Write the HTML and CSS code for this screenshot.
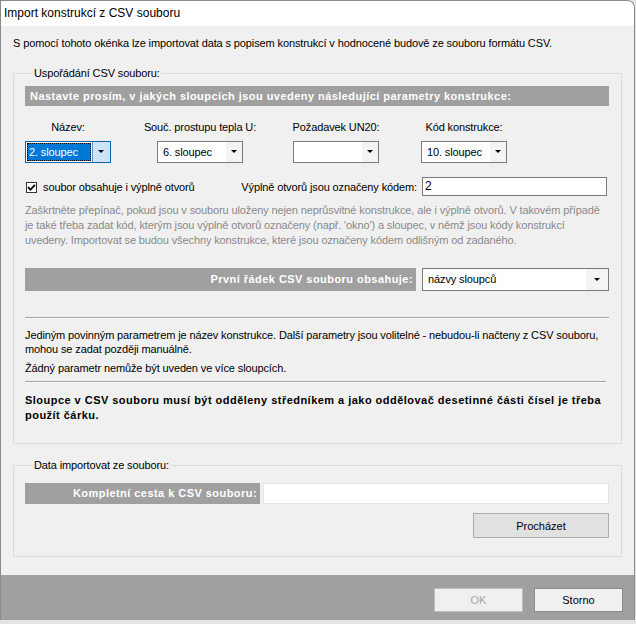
FILE: index.html
```html
<!DOCTYPE html>
<html lang="cs">

<head>
    <meta charset="UTF-8">
    <meta name="viewport" content="width=device-width, initial-scale=1.0">
    <title>Import konstrukcí z CSV souboru</title>
    <link rel="stylesheet" href="styles.css">
</head>

<body>
    <div class="window">
        <div class="titlebar">Import konstrukcí z CSV souboru</div>

        <div class="content">
            <p class="intro">S pomocí tohoto okénka lze importovat data s popisem konstrukcí v hodnocené budově ze souboru formátu CSV.</p>

            <fieldset class="group group-columns">
                <legend>Uspořádání CSV souboru:</legend>
                <div class="bar">Nastavte prosím, v jakých sloupcích jsou uvedeny následující parametry konstrukce:</div>

                <div class="columns">
                    <div class="col">
                        <span class="col-label">Název:</span>
                        <div class="combo combo-active">
                            <span class="combo-value"><span class="sel">2. sloupec</span></span>
                            <span class="combo-btn"></span>
                        </div>
                    </div>
                    <div class="col">
                        <span class="col-label">Souč. prostupu tepla U:</span>
                        <div class="combo">
                            <span class="combo-value">6. sloupec</span>
                            <span class="combo-btn"></span>
                        </div>
                    </div>
                    <div class="col">
                        <span class="col-label">Požadavek UN20:</span>
                        <div class="combo">
                            <span class="combo-value"></span>
                            <span class="combo-btn"></span>
                        </div>
                    </div>
                    <div class="col">
                        <span class="col-label">Kód konstrukce:</span>
                        <div class="combo">
                            <span class="combo-value">10. sloupec</span>
                            <span class="combo-btn"></span>
                        </div>
                    </div>
                </div>

                <div class="openings">
                    <label class="check">
                        <span class="box">
                            <svg width="9" height="9" viewBox="0 0 9 9"><path d="M1 4.2 L3.4 6.6 L8 1.8" fill="none" stroke="#000" stroke-width="1.8"/></svg>
                        </span>
                        soubor obsahuje i výplně otvorů
                    </label>
                    <span class="code-label">Výplně otvorů jsou označeny kódem:</span>
                    <div class="textbox">2</div>
                </div>

                <p class="hint">Zaškrtněte přepínač, pokud jsou v souboru uloženy nejen neprůsvitné konstrukce, ale i výplně otvorů. V takovém případě<br>je také třeba zadat kód, kterým jsou výplně otvorů označeny (např. 'okno') a sloupec, v němž jsou kódy konstrukcí<br>uvedeny. Importovat se budou všechny konstrukce, které jsou označeny kódem odlišným od zadaného.</p>

                <div class="first-row">
                    <div class="bar bar-right">První řádek CSV souboru obsahuje:</div>
                    <div class="combo combo-wide">
                        <span class="combo-value">názvy sloupců</span>
                        <span class="combo-btn"></span>
                    </div>
                </div>

                <hr class="sep">
                <p class="note">Jediným povinným parametrem je název konstrukce. Další parametry jsou volitelné - nebudou-li načteny z CSV souboru,<br>mohou se zadat později manuálně.</p>
                <p class="note note-second">Žádný parametr nemůže být uveden ve více sloupcích.</p>
                <hr class="sep sep-short">
                <p class="warning">Sloupce v CSV souboru musí být odděleny středníkem a jako oddělovač desetinné části čísel je třeba<br>použít čárku.</p>
            </fieldset>

            <fieldset class="group group-file">
                <legend>Data importovat ze souboru:</legend>
                <div class="path-row">
                    <div class="bar bar-right">Kompletní cesta k CSV souboru:</div>
                    <div class="path-input"></div>
                </div>
                <div class="browse-row">
                    <button class="btn btn-browse">Procházet</button>
                </div>
            </fieldset>
        </div>

        <div class="footer">
            <button class="btn btn-disabled">OK</button>
            <button class="btn">Storno</button>
        </div>
    </div>
</body>

</html>
```

FILE: styles.css
```css
body {
    margin: 0;
    background-color: #e4e4e4;
    font-family: 'Liberation Sans', Arial, sans-serif;
    font-size: 11px;
    letter-spacing: -0.12px;
    color: #000;
}

.window {
    width: 635px;
    height: 620px;
    box-sizing: border-box;
    border: 1px solid #8a8a8a;
    border-bottom: none;
    border-top-right-radius: 8px;
    background-color: #f0f0f0;
    display: flex;
    flex-direction: column;
    overflow: hidden;
}

.titlebar {
    height: 25px;
    line-height: 25px;
    padding-left: 3px;
    background-color: #fff;
    font-size: 12px;
    letter-spacing: 0;
}

.content {
    flex: 1;
    padding-left: 12px;
}

p {
    margin: 0;
}

.intro {
    margin-top: 11px;
    line-height: 13px;
}

/* group boxes */
.group {
    width: 609px;
    box-sizing: border-box;
    margin: 17px 0 0 0;
    padding: 0 12px 20px 11px;
    border: 1px solid #dcdcdc;
    min-width: 0;
}

.group legend {
    margin-left: 8px;
    padding: 0 1px;
    line-height: 13px;
}

.group-file {
    margin-top: 15px;
    padding-bottom: 18px;
}

.bar {
    margin-top: 6px;
    height: 20px;
    line-height: 20px;
    padding-left: 5px;
    background-color: #a0a0a0;
    color: #fff;
    font-weight: bold;
    letter-spacing: 0.45px;
    white-space: nowrap;
}

.bar-right {
    margin-top: 0;
    text-align: right;
    padding: 0 3px 0 0;
}

/* column pickers */
.columns {
    display: grid;
    grid-template-columns: 132px 136px 128px 86px;
    margin-top: 15px;
}

.col {
    width: 86px;
    display: flex;
    flex-direction: column;
    align-items: center;
}

.col-label {
    line-height: 13px;
    white-space: nowrap;
    margin-bottom: 7px;
}

.combo {
    width: 86px;
    height: 22px;
    box-sizing: border-box;
    border: 1px solid #7a7a7a;
    background-color: #fff;
    display: flex;
}

.combo-value {
    flex: 1;
    line-height: 20px;
    padding-left: 5px;
    white-space: nowrap;
    overflow: hidden;
}

.combo-btn {
    width: 16px;
    background-color: #f4f4f4;
    position: relative;
}

.combo-btn::after {
    content: "";
    position: absolute;
    left: 5px;
    top: 8px;
    border-left: 3px solid transparent;
    border-right: 3px solid transparent;
    border-top: 3px solid #000;
}

.combo-active {
    border-color: #0066b4;
}

.combo-active .combo-value {
    padding: 1px;
}

.combo-active .sel {
    display: block;
    height: 18px;
    line-height: 18px;
    padding-left: 2px;
    background-color: #0078d7;
    color: #fff;
    outline: 1px dotted #000;
    outline-offset: -1px;
}

.combo-active .combo-btn {
    width: 17px;
    background-color: #cce4f7;
    border-left: 1px solid #5a9ad0;
}

/* openings */
.openings {
    display: flex;
    align-items: center;
    margin-top: 14px;
    height: 19px;
}

.check {
    display: flex;
    align-items: center;
    padding: 1px 0 0 1px;
}

.box {
    width: 11px;
    height: 11px;
    box-sizing: border-box;
    border: 1px solid #333;
    background-color: #fff;
    margin-right: 6px;
    display: flex;
    align-items: center;
    justify-content: center;
}

.code-label {
    margin-left: auto;
    margin-right: 5px;
}

.textbox {
    width: 185px;
    height: 19px;
    box-sizing: border-box;
    border: 1px solid #7a7a7a;
    background-color: #fff;
    line-height: 17px;
    padding-left: 2px;
    margin-right: 2px;
    font-size: 12px;
}

.hint {
    margin-top: 7px;
    line-height: 15px;
    color: #8a8a8a;
    white-space: nowrap;
}

.first-row {
    display: flex;
    gap: 6px;
    margin-top: 20px;
}

.first-row .bar {
    flex: 1;
    height: 23px;
    line-height: 23px;
}

.combo-wide {
    width: 187px;
    height: 23px;
}

.combo-wide .combo-value {
    line-height: 21px;
    padding-left: 5px;
}

.combo-wide .combo-btn {
    width: 22px;
}

.combo-wide .combo-btn::after {
    left: 8px;
    top: 9px;
}

.sep {
    margin: 26px 0 0 0;
    border: none;
    border-top: 1px solid #a0a0a0;
    border-bottom: 1px solid #fff;
}

.sep-short {
    margin-top: 6px;
    margin-right: 3px;
}

.note {
    margin-top: 9px;
    line-height: 14px;
    white-space: nowrap;
}

.note-second {
    margin-top: 5px;
}

.warning {
    margin-top: 10px;
    line-height: 15px;
    font-weight: bold;
    letter-spacing: 0.47px;
    white-space: nowrap;
}

/* file group */
.path-row {
    display: flex;
    gap: 3px;
    margin-top: 11px;
    height: 21px;
}

.path-row .bar {
    width: 235px;
    box-sizing: border-box;
    height: 21px;
    line-height: 21px;
}

.path-input {
    flex: 1;
    background-color: #fff;
    border: 1px solid #e4e4e4;
}

.browse-row {
    display: flex;
    justify-content: flex-end;
    margin-top: 9px;
}

.btn {
    font-family: inherit;
    font-size: 11px;
    height: 25px;
    box-sizing: border-box;
    border: 1px solid #adadad;
    background-color: #e1e1e1;
    color: #000;
    padding: 0;
}

.btn-browse {
    width: 136px;
}

.footer {
    height: 45px;
    background-color: #a0a0a0;
    display: flex;
    justify-content: flex-end;
    gap: 11px;
    padding: 13px 11px 0 0;
    box-sizing: border-box;
}

.footer .btn {
    width: 89px;
    height: 24px;
    background-color: #f0f0f0;
    border-color: #8c8c8c;
}

.footer .btn-disabled {
    color: #a6a6a6;
    border-color: #bfbfbf;
}
```
